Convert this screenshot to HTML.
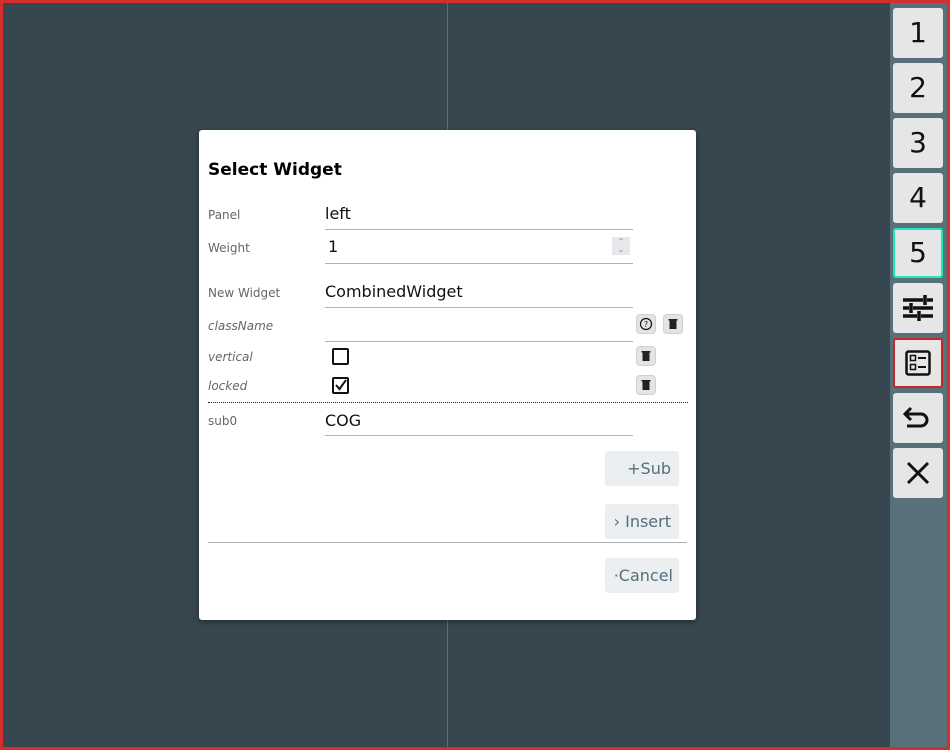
<!DOCTYPE html>
<html><head><style>
*{margin:0;padding:0;box-sizing:border-box}
body{width:950px;height:750px;overflow:hidden;background:#37474f;font-family:"DejaVu Sans","Liberation Sans",sans-serif;position:relative}
.frame{position:absolute;left:0;top:0;width:950px;height:750px;border:3px solid #d32f2f;z-index:10;pointer-events:none}
.vline{position:absolute;left:447px;top:0;width:1px;height:750px;background:#5f6b70}
.side{position:absolute;left:890px;top:0;width:57px;height:750px;background:#587079}
.btn{position:absolute;left:893px;width:50px;height:50px;background:#e6e6e6;border-radius:3px;font-size:28px;text-align:center;line-height:50px;color:#111}
.dlg{position:absolute;left:199px;top:130px;width:497px;height:490px;background:#fff;border-radius:3px;box-shadow:0 2px 6px rgba(0,0,0,.4)}
.a{position:absolute}
.lbl{position:absolute;left:9px;font-size:12px;color:#666;margin-top:1px}
.it{font-style:italic}
.val{position:absolute;left:126px;font-size:16px;color:#111;margin-top:1px}
.ul{position:absolute;left:126px;width:308px;height:1px;background:#b0b0b0}
.ib{position:absolute;width:20px;height:20px;background:#e4e4e4;border-radius:4px;border:1px solid #d0d0d0}
.bt{position:absolute;left:406px;width:74px;height:35px;background:#eceff1;border-radius:3px;color:#546e7a;font-size:16px;text-align:right;padding-right:8px;line-height:35px}
</style></head><body>
<div class="vline"></div>
<div class="side"></div>
<div class="btn" style="top:8px">1</div>
<div class="btn" style="top:63px">2</div>
<div class="btn" style="top:118px">3</div>
<div class="btn" style="top:173px">4</div>
<div class="btn" style="top:228px;border:2px solid #1de9b6;line-height:46px">5</div>
<div class="btn" style="top:283px"><svg width="50" height="50" viewBox="0 0 50 50"><g stroke="#111" stroke-width="3.5"><path d="M10 17h20M34 17h6M32 12v10M10 25h6M20 25h20M18 20v10M10 33h14M28 33h12M26 28v10"/></g></svg></div>
<div class="btn" style="top:338px;border:2px solid #c62828"><svg width="46" height="46" viewBox="0 0 46 46"><rect x="11.5" y="11.5" width="23" height="23" rx="2" fill="none" stroke="#111" stroke-width="2.5"/><rect x="15.5" y="15.5" width="5" height="5" fill="none" stroke="#111" stroke-width="1.5"/><rect x="15.5" y="24.5" width="5" height="5" fill="none" stroke="#111" stroke-width="1.5"/><path d="M23 18h8M23 27h8" stroke="#111" stroke-width="2"/></svg></div>
<div class="btn" style="top:393px"><svg width="50" height="50" viewBox="0 0 50 50"><path d="M18 15l-6 6 6 6M12 21h16a6 6 0 0 1 0 12h-14" fill="none" stroke="#111" stroke-width="3"/></svg></div>
<div class="btn" style="top:448px"><svg width="50" height="50" viewBox="0 0 50 50"><path d="M15 15l20 20M35 15l-20 20" stroke="#111" stroke-width="3"/></svg></div>

<div class="dlg">
<div class="a" style="left:9px;top:30px;font-size:17px;font-weight:bold;color:#000">Select Widget</div>
<div class="lbl" style="top:77px">Panel</div>
<div class="val" style="top:73px">left</div>
<div class="ul" style="top:99px"></div>
<div class="lbl" style="top:110px">Weight</div>
<div class="val" style="top:106px;left:129px">1</div>
<div class="a" style="left:413px;top:107px;width:18px;height:18px;background:#e8e8ec;color:#888;font-size:8px;text-align:center;line-height:8px;padding-top:1px">⌃<br>⌄</div>
<div class="ul" style="top:133px"></div>
<div class="lbl" style="top:155px">New Widget</div>
<div class="val" style="top:151px">CombinedWidget</div>
<div class="ul" style="top:177px"></div>
<div class="lbl it" style="top:188px">className</div>
<div class="ul" style="top:211px"></div>
<div class="ib" style="left:437px;top:184px"><svg width="18" height="18" viewBox="0 0 18 18"><circle cx="9" cy="9" r="5.5" fill="none" stroke="#111" stroke-width="1.2"/><text x="9" y="12" font-size="8" text-anchor="middle" font-family="DejaVu Sans" fill="#111">?</text></svg></div>
<div class="ib" style="left:464px;top:184px"><svg width="18" height="18" viewBox="0 0 18 18"><rect x="5.5" y="5" width="7" height="9" fill="#222"/><rect x="4.5" y="4" width="9" height="1.5" fill="#222"/></svg></div>
<div class="lbl it" style="top:219px">vertical</div>
<div class="a" style="left:133px;top:218px;width:17px;height:17px;border:2px solid #111;border-radius:2px"></div>
<div class="ib" style="left:437px;top:216px"><svg width="18" height="18" viewBox="0 0 18 18"><rect x="5.5" y="5" width="7" height="9" fill="#222"/><rect x="4.5" y="4" width="9" height="1.5" fill="#222"/></svg></div>
<div class="lbl it" style="top:248px">locked</div>
<div class="a" style="left:133px;top:247px;width:17px;height:17px;border:2px solid #111;border-radius:2px"><svg width="13" height="13" style="position:absolute;left:0;top:0"><path d="M2 6l3.5 4L12 1" fill="none" stroke="#111" stroke-width="2"/></svg></div>
<div class="ib" style="left:437px;top:245px"><svg width="18" height="18" viewBox="0 0 18 18"><rect x="5.5" y="5" width="7" height="9" fill="#222"/><rect x="4.5" y="4" width="9" height="1.5" fill="#222"/></svg></div>
<div class="a" style="left:9px;top:272px;width:480px;border-top:1px dotted #222"></div>
<div class="lbl" style="top:283px">sub0</div>
<div class="val" style="top:280px">COG</div>
<div class="ul" style="top:305px"></div>
<div class="bt" style="top:321px">+Sub</div>
<div class="bt" style="top:374px">› Insert</div>
<div class="a" style="left:9px;top:412px;width:479px;height:1px;background:#b0b0b0"></div>
<div class="bt" style="top:428px;padding-right:6px">·Cancel</div>
</div>
<div class="frame"></div>
</body></html>
